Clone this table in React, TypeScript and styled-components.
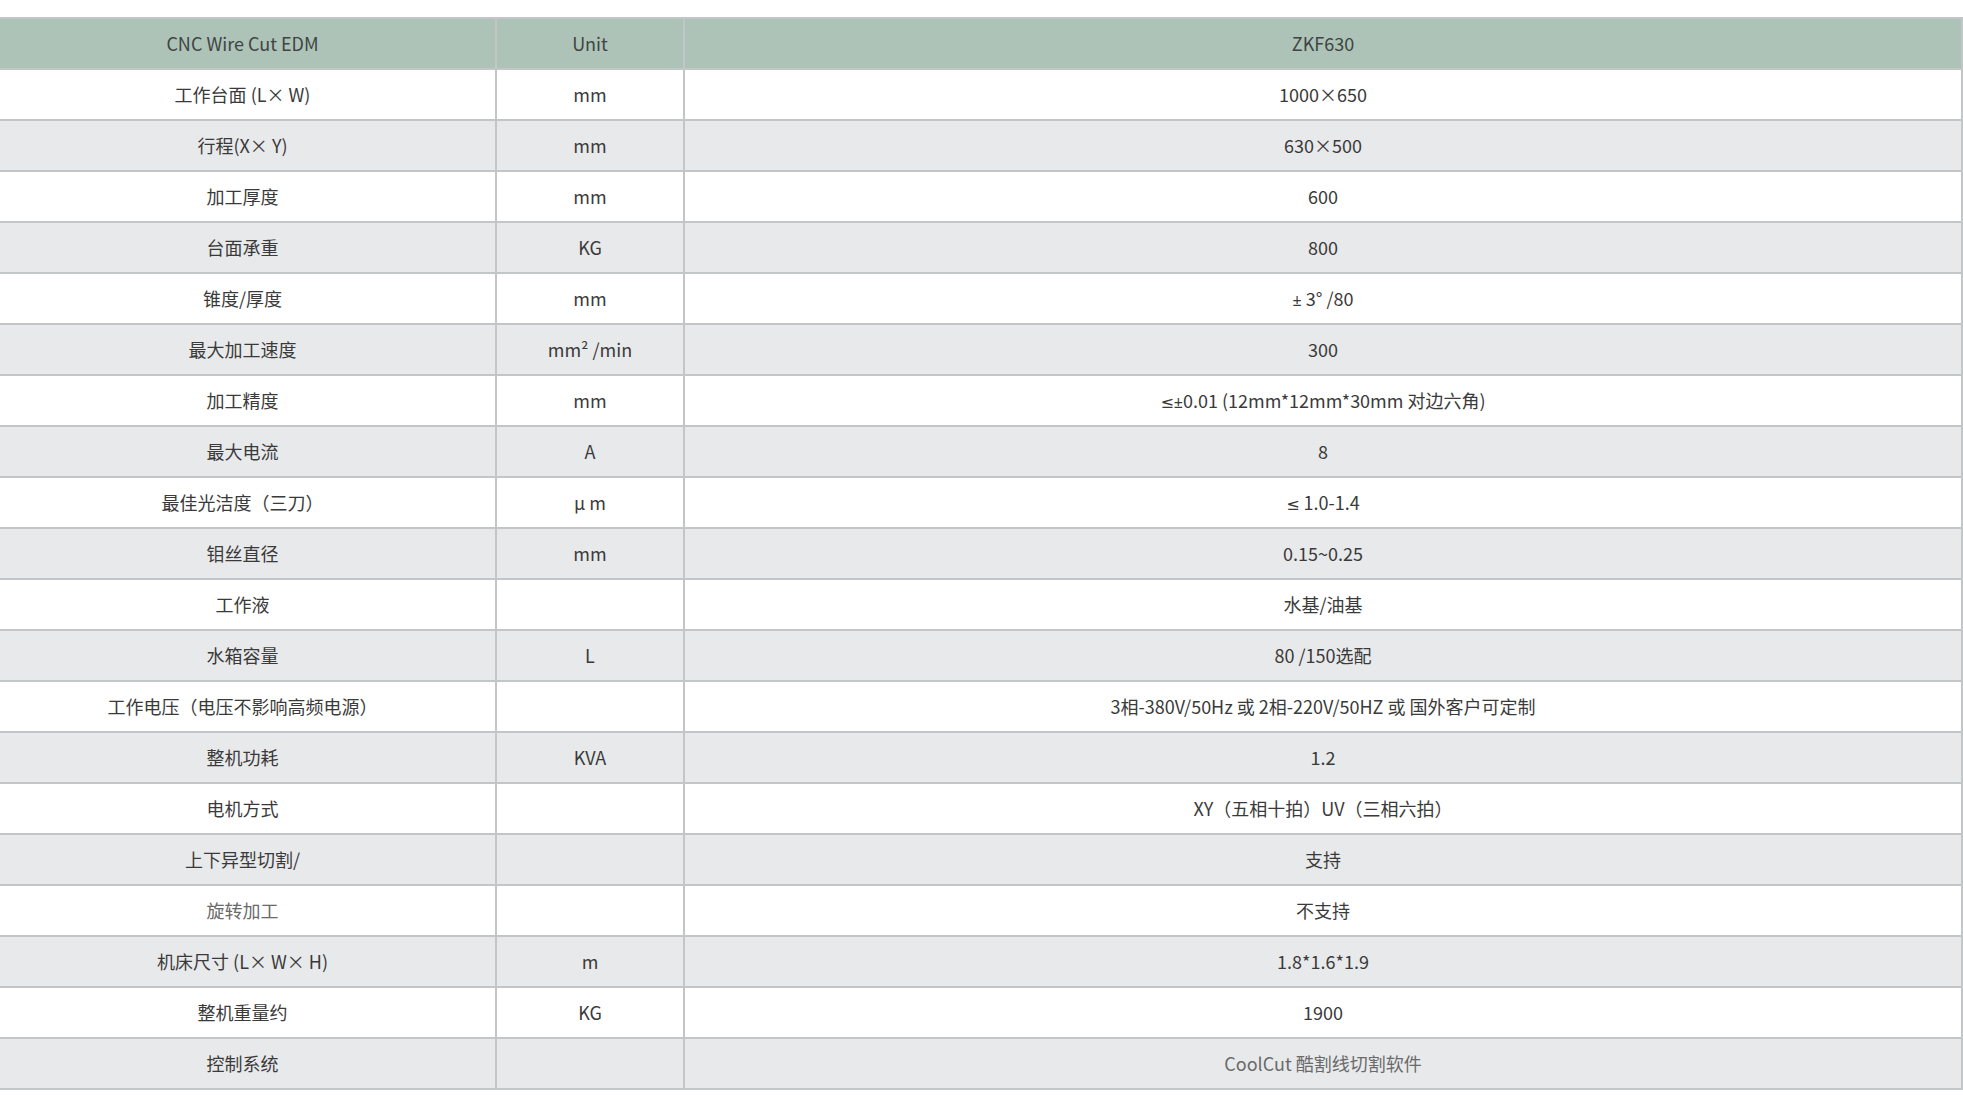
import React from "react";
import styled, { createGlobalStyle } from "styled-components";

const Global = createGlobalStyle`
  html, body { margin: 0; padding: 0; background: #ffffff; }
  body { font-family: "Noto Sans CJK SC", "Noto Sans", sans-serif; overflow: hidden; }
`;

const Page = styled.div`
  padding-top: 17px;
  width: 1963px;
`;

const Table = styled.table`
  width: 1962px;
  table-layout: fixed;
  border-collapse: collapse;
  font-family: "Noto Sans CJK SC", "Noto Sans", sans-serif;
  font-size: 18px;
  color: #3a3a3a;
`;

const HeadRow = styled.tr`
  background: #adc3b7;
  height: 51px;
`;

const Row = styled.tr<{ $alt: boolean }>`
  background: ${(p) => (p.$alt ? "#e8e9eb" : "#ffffff")};
  height: 51px;
`;

const Th = styled.th`
  font-weight: 400;
  color: #404444;
  border: 2px solid #c3c6c8;
  text-align: center;
  vertical-align: middle;
  padding: 0 0 2px 0;
  &:first-child { border-left: none; padding-right: 10px; }
`;

const Td = styled.td<{ $muted?: boolean }>`
  border: 2px solid #c3c6c8;
  text-align: center;
  vertical-align: middle;
  padding: 0 0 2px 0;
  color: ${(p) => (p.$muted ? "#6a6a6a" : "#3a3a3a")};
  &:first-child { border-left: none; padding-right: 10px; }
`;

const Sym = styled.span`
  font-family: "Noto Sans", "DejaVu Sans", sans-serif;
  font-size: 16px;
`;

type Spec = { name: string; unit: string; value: React.ReactNode; mutedName?: boolean; mutedValue?: boolean };

const specs: Spec[] = [
  { name: "工作台面 (L× W)", unit: "mm", value: "1000×650" },
  { name: "行程(X× Y)", unit: "mm", value: "630×500" },
  { name: "加工厚度", unit: "mm", value: "600" },
  { name: "台面承重", unit: "KG", value: "800" },
  { name: "锥度/厚度", unit: "mm", value: <><Sym>±</Sym> 3° /80</> },
  { name: "最大加工速度", unit: "mm² /min", value: "300" },
  { name: "加工精度", unit: "mm", value: <><Sym>≤±</Sym>0.01 (12mm*12mm*30mm 对边六角)</> },
  { name: "最大电流", unit: "A", value: "8" },
  { name: "最佳光洁度（三刀）", unit: "μ m", value: <><Sym>≤</Sym> 1.0-1.4</> },
  { name: "钼丝直径", unit: "mm", value: "0.15~0.25" },
  { name: "工作液", unit: "", value: "水基/油基" },
  { name: "水箱容量", unit: "L", value: "80 /150选配" },
  { name: "工作电压（电压不影响高频电源）", unit: "", value: "3相-380V/50Hz 或 2相-220V/50HZ 或 国外客户可定制" },
  { name: "整机功耗", unit: "KVA", value: "1.2" },
  { name: "电机方式", unit: "", value: "XY（五相十拍）UV（三相六拍）" },
  { name: "上下异型切割/", unit: "", value: "支持" },
  { name: "旋转加工", unit: "", value: "不支持", mutedName: true },
  { name: "机床尺寸 (L× W× H)", unit: "m", value: "1.8*1.6*1.9" },
  { name: "整机重量约", unit: "KG", value: "1900" },
  { name: "控制系统", unit: "", value: "CoolCut 酷割线切割软件", mutedValue: true },
];

export default function App() {
  return (
    <Page>
      <Global />
      <Table>
        <colgroup>
          <col style={{ width: "496px" }} />
          <col style={{ width: "188px" }} />
          <col style={{ width: "1278px" }} />
        </colgroup>
        <thead>
          <HeadRow>
            <Th>CNC Wire Cut EDM</Th>
            <Th>Unit</Th>
            <Th>ZKF630</Th>
          </HeadRow>
        </thead>
        <tbody>
          {specs.map((s, i) => (
            <Row key={i} $alt={i % 2 === 1}>
              <Td $muted={s.mutedName}>{s.name}</Td>
              <Td>{s.unit}</Td>
              <Td $muted={s.mutedValue}>{s.value}</Td>
            </Row>
          ))}
        </tbody>
      </Table>
    </Page>
  );
}
